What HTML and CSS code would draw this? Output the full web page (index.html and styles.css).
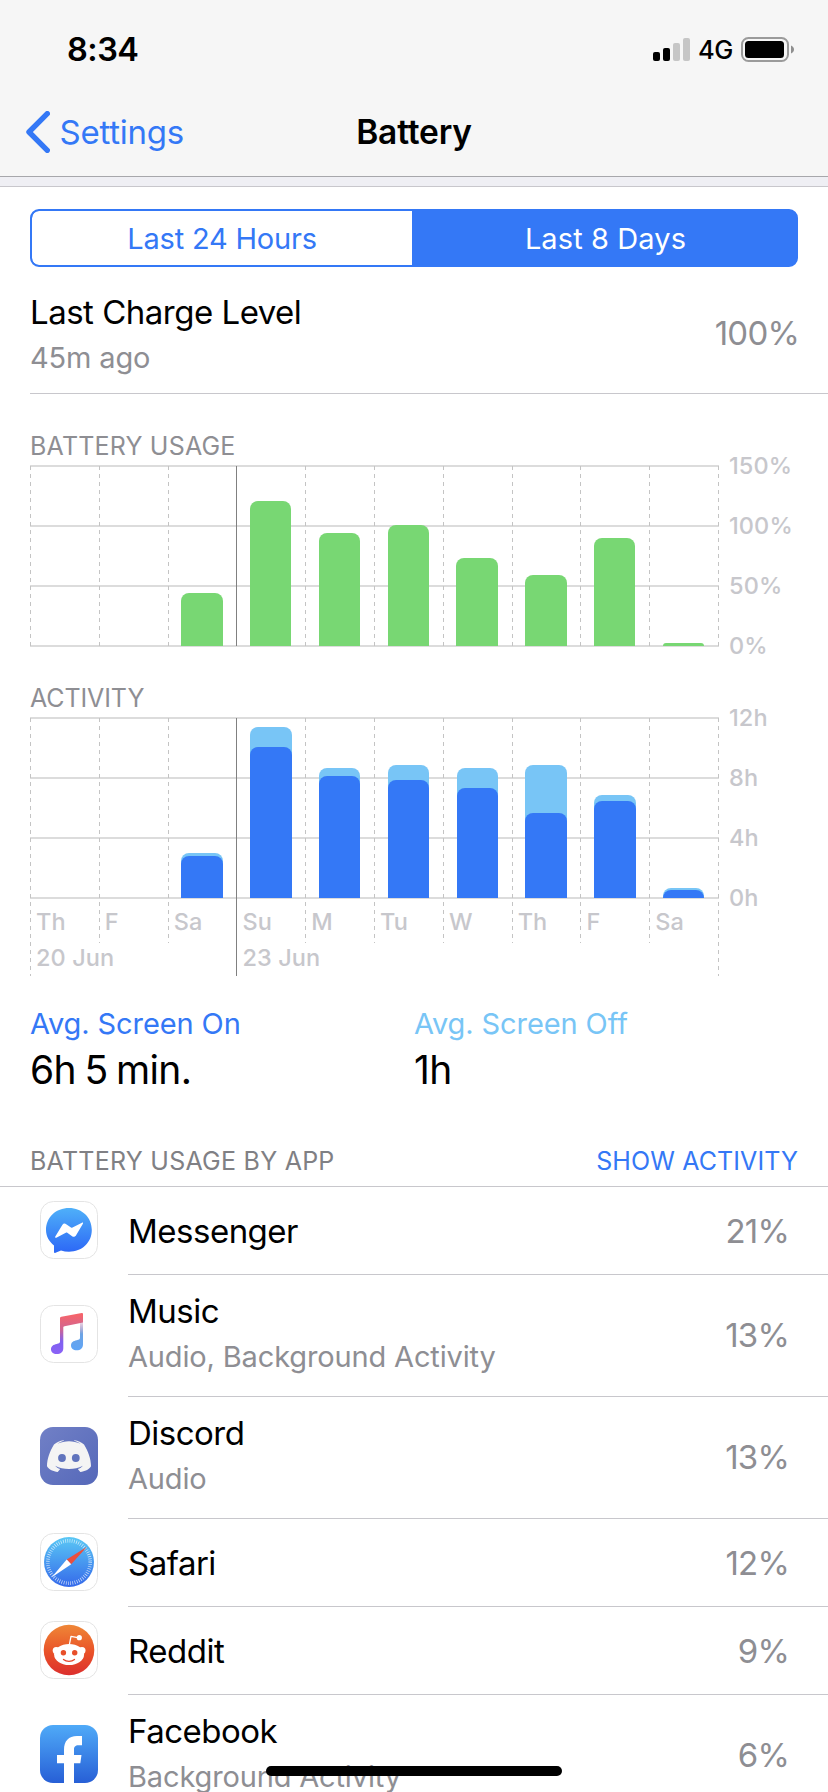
FILE: index.html
```html
<!DOCTYPE html>
<html lang="en">
  <head>
    <meta charset="UTF-8" />
    <meta name="viewport" content="width=device-width, initial-scale=1.0" />
    <title>Battery</title>
    <link rel="stylesheet" href="styles.css">
  </head>
  <body>
    <div class="screen">
      <header class="header">
        <div class="status-bar">
          <span class="time">8:34</span>
          <div class="status-icons">
            <svg class="signal" width="37" height="23" viewBox="0 0 37 23">
              <rect x="0" y="14" width="7" height="9" rx="2" />
              <rect x="10" y="10" width="7" height="13" rx="2" />
              <rect x="20" y="5" width="7" height="18" rx="2" fill="#c6c6c6" />
              <rect x="30" y="0" width="7" height="23" rx="2" fill="#c6c6c6" />
            </svg>
            <span class="network">4G</span>
            <svg width="53" height="25" viewBox="0 0 53 25">
              <rect x="1" y="1" width="46" height="23" rx="6.5" fill="none" stroke="#9b9b9b" stroke-width="2" />
              <rect x="4" y="4" width="39" height="17" rx="3.5" />
              <path d="M50 8.5c4 1.5 4 6.500 0 8z" fill="#8f8f8f" />
            </svg>
          </div>
        </div>
        <div class="nav-bar">
          <a class="back">
            <svg width="24" height="42" viewBox="0 0 24 42">
              <path d="M21.3 2.7L3 21l18.3 18.3" fill="none" stroke="#3478f6" stroke-width="5.4" stroke-linecap="round" stroke-linejoin="round" />
            </svg>
            <span class="back-label">Settings</span>
          </a>
          <h1>Battery</h1>
        </div>
      </header>

      <main>
        <div class="segmented">
          <button class="segment day">Last 24 Hours</button>
          <button class="segment week active">Last 8 Days</button>
        </div>

        <div class="charge">
          <div class="charge-text">
            <div class="charge-title">Last Charge Level</div>
            <div class="charge-time">45m ago</div>
          </div>
          <span class="charge-value">100%</span>
        </div>

        <h2 class="usage-title">BATTERY USAGE</h2>
        <div class="chart">
          <div class="plot usage">
            <div class="col"></div>
            <div class="col"></div>
            <div class="col"><div class="bars"><div class="bar" style="height: 53px"></div></div></div>
            <div class="col week-start"><div class="bars"><div class="bar" style="height: 145.3px"></div></div></div>
            <div class="col"><div class="bars"><div class="bar" style="height: 113px"></div></div></div>
            <div class="col"><div class="bars"><div class="bar" style="height: 121px"></div></div></div>
            <div class="col"><div class="bars"><div class="bar" style="height: 88px"></div></div></div>
            <div class="col"><div class="bars"><div class="bar" style="height: 71px"></div></div></div>
            <div class="col"><div class="bars"><div class="bar" style="height: 108px"></div></div></div>
            <div class="col"><div class="bars"><div class="bar" style="height: 2.7px"></div></div></div>
            <div class="col end"></div>
          </div>
          <div class="axis">
            <span>150%</span>
            <span>100%</span>
            <span>50%</span>
            <span>0%</span>
          </div>
        </div>

        <h2 class="activity-title">ACTIVITY</h2>
        <div class="chart">
          <div class="plot activity">
            <div class="col tall">
              <div class="bars"></div>
              <div class="weekday">Th</div>
              <div class="date">20 Jun</div>
            </div>
            <div class="col">
              <div class="bars"></div>
              <div class="weekday">F</div>
            </div>
            <div class="col">
              <div class="bars"><div class="bar off" style="height: 45px"><div class="bar on" style="height: 42px"></div></div></div>
              <div class="weekday">Sa</div>
            </div>
            <div class="col tall week-start">
              <div class="bars"><div class="bar off" style="height: 171px"><div class="bar on" style="height: 151px"></div></div></div>
              <div class="weekday">Su</div>
              <div class="date">23 Jun</div>
            </div>
            <div class="col">
              <div class="bars"><div class="bar off" style="height: 130px"><div class="bar on" style="height: 122px"></div></div></div>
              <div class="weekday">M</div>
            </div>
            <div class="col">
              <div class="bars"><div class="bar off" style="height: 133.5px"><div class="bar on" style="height: 118px"></div></div></div>
              <div class="weekday">Tu</div>
            </div>
            <div class="col">
              <div class="bars"><div class="bar off" style="height: 130px"><div class="bar on" style="height: 110px"></div></div></div>
              <div class="weekday">W</div>
            </div>
            <div class="col">
              <div class="bars"><div class="bar off" style="height: 132.7px"><div class="bar on" style="height: 84.7px"></div></div></div>
              <div class="weekday">Th</div>
            </div>
            <div class="col">
              <div class="bars"><div class="bar off" style="height: 103px"><div class="bar on" style="height: 97.3px"></div></div></div>
              <div class="weekday">F</div>
            </div>
            <div class="col">
              <div class="bars"><div class="bar off" style="height: 10px"><div class="bar on" style="height: 8.3px"></div></div></div>
              <div class="weekday">Sa</div>
            </div>
            <div class="col end tall"></div>
          </div>
          <div class="axis">
            <span>12h</span>
            <span>8h</span>
            <span>4h</span>
            <span>0h</span>
          </div>
        </div>

        <div class="averages">
          <div>
            <div class="avg-label screen-on">Avg. Screen On</div>
            <div class="avg-value">6h 5 min.</div>
          </div>
          <div>
            <div class="avg-label screen-off">Avg. Screen Off</div>
            <div class="avg-value">1h</div>
          </div>
        </div>

        <div class="list-header">
          <h2>BATTERY USAGE BY APP</h2>
          <a class="show-activity">SHOW ACTIVITY</a>
        </div>

        <ul class="app-list">
          <li class="app">
            <svg class="icon" viewBox="0 0 58 58">
              <defs>
                <linearGradient id="messenger" x1="0" y1="0" x2="0" y2="1">
                  <stop offset="0" stop-color="#4fb0f9" />
                  <stop offset="1" stop-color="#2c67f6" />
                </linearGradient>
              </defs>
              <rect class="tile" x="0.5" y="0.5" width="57" height="57" rx="13" />
              <path fill="url(#messenger)" d="M29 7C16 7 6 16.300 6 29c0 6.300 3.200 11.700 8 15.500V51c0 1 .7 1.200 1.500.8l5.500-2.300c2.500.8 5.200 1.200 8 1.200 13 0 22.800-9.200 22.800-21.700S42 7 29 7z" />
              <path fill="#fff" d="M15.300 35.600l7-11.600c1-1.500 2.500-1.800 3.900-.8l4.800 3.300c.5.300 1 .3 1.500 0l9.500-4.800c.8-.4 1.400.3.9 1.100l-6.800 11.500c-1 1.600-2.600 1.900-4 .9l-4.800-3.400c-.5-.3-1-.3-1.500 0l-9.500 4.900c-.9.5-1.500-.3-1-1.100z" />
            </svg>
            <div class="app-row">
              <div class="app-name">Messenger</div>
              <span class="percent">21%</span>
            </div>
          </li>
          <li class="app large">
            <svg class="icon" viewBox="0 0 58 58">
              <defs>
                <linearGradient id="note" x1="0" y1="0" x2="0" y2="1">
                  <stop offset="0.05" stop-color="#f5646b" />
                  <stop offset="0.4" stop-color="#cf6594" />
                  <stop offset="0.7" stop-color="#7f60f0" />
                  <stop offset="1" stop-color="#8b62f6" />
                </linearGradient>
                <linearGradient id="noteRight" x1="0" y1="0" x2="0" y2="1">
                  <stop offset="0.1" stop-color="#d5628b" stop-opacity="0" />
                  <stop offset="0.55" stop-color="#6ca3e4" />
                  <stop offset="1" stop-color="#5fa5f7" />
                </linearGradient>
              </defs>
              <rect class="tile" x="0.5" y="0.5" width="57" height="57" rx="13" />
              <path fill="url(#note)" d="M20 13.500c0-1 .4-1.500 1.400-1.700L41.700 8c.9-.2 1.300.2 1.300 1v8.500l-18.500 3.800c-.9.200-1.200.5-1.200 1.300v20.600c0 3.800-2.600 5.900-6.600 5.900-3.400 0-5.700-2-5.700-4.900 0-3.200 2.400-4.700 5.700-5.300 2.100-.4 3.300-.7 3.300-2.400z" />
              <path fill="url(#noteRight)" d="M43 9v30.500c0 3.800-2.600 5.800-6.300 5.800-3.400 0-5.700-1.900-5.700-4.800 0-3.200 2.400-4.700 5.700-5.300 2.100-.4 3.300-.7 3.300-2.400V10z" />
            </svg>
            <div class="app-row">
              <div>
                <div class="app-name">Music</div>
                <div class="app-detail">Audio, Background Activity</div>
              </div>
              <span class="percent">13%</span>
            </div>
          </li>
          <li class="app large">
            <svg class="icon" viewBox="0 0 58 58">
              <defs>
                <linearGradient id="discord" x1="0" y1="0" x2="1" y2="1">
                  <stop offset="0" stop-color="#7180c6" />
                  <stop offset="1" stop-color="#5568b9" />
                </linearGradient>
              </defs>
              <rect width="58" height="58" rx="13" fill="url(#discord)" />
              <path fill="#f4f4f4" d="M14 17.500c2.500-2.300 6-4 9.500-4.300l.5.600c-2.500.6-4.500 1.500-6.500 3 7-3.400 16-3.400 23 0-2-1.500-4-2.400-6.500-3l.5-.6c3.500.3 7 2 9.500 4.300C48 24 51 31.500 51 39.300c-2 3.300-6.300 5.300-10.700 5.600L37.800 42c2.200-.7 3.800-1.700 5-3.300-7.800 4.300-19.800 4.300-27.600 0 1.200 1.600 2.800 2.600 5 3.300l-2.500 2.900C13.300 44.600 9 42.600 7 39.300 7 31.500 10 24 14 17.500z" />
              <ellipse cx="22" cy="31" rx="3.9" ry="4.1" fill="#6174bd" />
              <ellipse cx="35.8" cy="31" rx="3.9" ry="4.1" fill="#6174bd" />
            </svg>
            <div class="app-row">
              <div>
                <div class="app-name">Discord</div>
                <div class="app-detail">Audio</div>
              </div>
              <span class="percent">13%</span>
            </div>
          </li>
          <li class="app">
            <svg class="icon" viewBox="0 0 58 58">
              <defs>
                <linearGradient id="safari" x1="0" y1="0" x2="0" y2="1">
                  <stop offset="0" stop-color="#5ac8f5" />
                  <stop offset="1" stop-color="#3569ea" />
                </linearGradient>
              </defs>
              <rect class="tile" x="0.5" y="0.5" width="57" height="57" rx="13" />
              <circle cx="29" cy="29" r="25" fill="url(#safari)" />
              <circle cx="29" cy="29" r="21.2" fill="none" stroke="#fff" stroke-opacity="0.75" stroke-width="3.6" stroke-dasharray="0.7 1.52" />
              <path fill="#eb4e3d" d="M47 13.700L26.700 26.600l4.500 4.700z" />
              <path fill="#fff" d="M11.500 44.500l15.200-17.900 4.500 4.700z" />
            </svg>
            <div class="app-row">
              <div class="app-name">Safari</div>
              <span class="percent">12%</span>
            </div>
          </li>
          <li class="app">
            <svg class="icon" viewBox="0 0 58 58">
              <defs>
                <linearGradient id="reddit" x1="0" y1="0" x2="0" y2="1">
                  <stop offset="0" stop-color="#ef8737" />
                  <stop offset="0.55" stop-color="#e95128" />
                  <stop offset="1" stop-color="#dc2f2e" />
                </linearGradient>
              </defs>
              <rect class="tile" x="0.5" y="0.5" width="57" height="57" rx="13" />
              <circle cx="29" cy="29" r="25.3" fill="url(#reddit)" />
              <path d="M29.300 24L31 15.300l8 1.500" fill="none" stroke="#fff" stroke-width="1.3" stroke-linejoin="round" />
              <g fill="#fff">
                <circle cx="39.3" cy="16.7" r="2.6" />
                <circle cx="16.2" cy="29.5" r="3.5" />
                <circle cx="42" cy="29.5" r="3.5" />
                <ellipse cx="29.1" cy="33.5" rx="15" ry="10.5" />
              </g>
              <circle cx="23.4" cy="31.8" r="2.7" fill="#e84f29" />
              <circle cx="34.7" cy="31.8" r="2.7" fill="#e84f29" />
              <path d="M23.500 38.500c3 2.500 8 2.500 11 0" fill="none" stroke="#e5452b" stroke-width="1.3" stroke-linecap="round" />
            </svg>
            <div class="app-row">
              <div class="app-name">Reddit</div>
              <span class="percent">9%</span>
            </div>
          </li>
          <li class="app large">
            <svg class="icon" viewBox="0 0 58 58">
              <defs>
                <linearGradient id="facebook" x1="0" y1="0" x2="0" y2="1">
                  <stop offset="0" stop-color="#4faaf8" />
                  <stop offset="1" stop-color="#275fd6" />
                </linearGradient>
              </defs>
              <rect width="58" height="58" rx="13" fill="url(#facebook)" />
              <path fill="#fff" d="M24 58V38.300h-7V30h7v-5c0-9 4.600-14 13-14h5v9.300h-3.500c-3.300 0-4.500 1.500-4.500 4.700v5h7.500l-1.200 8.300H34V58z" />
            </svg>
            <div class="app-row">
              <div>
                <div class="app-name">Facebook</div>
                <div class="app-detail">Background Activity</div>
              </div>
              <span class="percent">6%</span>
            </div>
          </li>
        </ul>
      </main>
      <div class="home-indicator"></div>
    </div>
  </body>
</html>
```
FILE: styles.css
```css
* {
  box-sizing: border-box;
}
body {
  margin: 0;
  font-family: "Inter", "Liberation Sans", sans-serif;
  background-color: #fff;
  color: #000;
}
h1,
h2 {
  margin: 0;
  font-weight: 400;
}
svg {
  display: block;
}
.screen {
  position: relative;
  width: 828px;
  height: 1792px;
  overflow: hidden;
}
.header {
  height: 177px;
  background-color: #f6f6f6;
  border-bottom: 1px solid #a7a7ab;
}
.status-bar {
  display: flex;
  justify-content: space-between;
  align-items: center;
  height: 99px;
  padding: 0 34px 0 67px;
}
.time {
  font-size: 32.5px;
  font-weight: 600;
  letter-spacing: -0.5px;
}
.status-icons {
  display: flex;
  align-items: center;
}
.network {
  width: 51px;
  padding-left: 8px;
  font-size: 25.5px;
  font-weight: 500;
  letter-spacing: -0.5px;
}
.nav-bar {
  display: grid;
  grid-template-columns: 1fr auto 1fr;
  align-items: center;
  height: 66px;
  padding: 0 26px;
}
.back {
  display: flex;
  align-items: center;
  gap: 9.5px;
  color: #3478f6;
}
.back-label {
  font-size: 33px;
  letter-spacing: -0.25px;
}
h1 {
  font-size: 33.5px;
  font-weight: 600;
  letter-spacing: -0.2px;
}
main {
  margin-top: 9px;
  border-top: 1px solid #c8c7cc;
  box-shadow: 0 -9px 0 #efeff4;
}
.segmented {
  display: flex;
  height: 58px;
  margin: 22px 30px 0;
  border: 2px solid #3478f6;
  border-radius: 9px;
  background-color: #3478f6;
  overflow: hidden;
}
.segment {
  padding: 0;
  border: none;
  background-color: #fff;
  color: #3478f6;
  font-family: inherit;
  font-size: 29px;
  letter-spacing: -0.2px;
}
.day {
  width: 380px;
  border-radius: 7px 0 0 7px;
}
.week {
  flex: 1;
  padding-left: 3px;
  letter-spacing: 0.1px;
}
.segment.active {
  background-color: #3478f6;
  color: #fff;
}
.charge {
  display: flex;
  justify-content: space-between;
  align-items: center;
  height: 127px;
  margin-left: 30px;
  padding: 5px 29px 0 0;
  border-bottom: 1px solid #c8c7cc;
}
.charge-text {
  padding-top: 3px;
}
.charge-title,
.app-name {
  font-size: 33px;
  line-height: 46px;
  letter-spacing: -0.5px;
}
.charge-time,
.app-detail {
  color: #8e8e93;
  font-size: 29px;
  line-height: 45px;
  letter-spacing: -0.15px;
}
.charge-value,
.percent {
  color: #8e8e93;
  font-size: 33px;
  letter-spacing: -0.8px;
}
h2 {
  color: #8e8e93;
  font-size: 25px;
  line-height: 30px;
  letter-spacing: 0.2px;
}
.usage-title,
.activity-title {
  padding-left: 30px;
}
.usage-title {
  margin-top: 37px;
}
.activity-title {
  margin-top: 36px;
  letter-spacing: -0.1px;
}
.chart {
  display: flex;
  margin-top: 4px;
  padding-left: 30px;
}
.plot {
  display: flex;
  align-items: flex-start;
  width: 689px;
  padding-top: 1px;
  background: repeating-linear-gradient(#dcdcdc 0 2px, transparent 2px 60px) no-repeat;
  background-size: 689px 182px;
}
.usage {
  height: 182px;
}
.activity {
  height: 259px;
}
.col {
  width: 68.85px;
  height: 180px;
  background: repeating-linear-gradient(#c4c4c4 0 4px, transparent 4px 8px) no-repeat;
  background-size: 1px 100%;
}
.activity .col {
  height: 225px;
}
.activity .tall {
  height: 258px;
}
.col.week-start {
  background: none;
  border-left: 1px solid #808080;
}
.week-start .bars,
.week-start .weekday,
.week-start .date {
  margin-left: -1px;
}
.col.end {
  width: 1px;
}
.bars {
  display: flex;
  justify-content: center;
  align-items: flex-end;
  height: 180px;
}
.bar {
  width: 41.4px;
  border-radius: 8px 8px 0 0;
  background-color: #78d773;
}
.bar.off {
  display: flex;
  align-items: flex-end;
  background-color: #78c5f6;
}
.bar.on {
  background-color: #3478f6;
}
.weekday,
.date,
.axis {
  color: #c7c7cc;
  font-size: 23.5px;
  font-weight: 500;
  letter-spacing: 0.1px;
  white-space: nowrap;
}
.weekday,
.date {
  padding-left: 6px;
  line-height: 36px;
}
.weekday {
  padding-top: 6px;
}
.axis {
  display: flex;
  flex-direction: column;
  height: 182px;
  margin-top: -29px;
  padding-left: 10px;
}
.axis span {
  line-height: 60px;
}
.averages {
  display: grid;
  grid-template-columns: 1fr 1fr;
  margin: 27px 30px 0;
}
.avg-label {
  font-size: 29px;
  line-height: 42px;
  letter-spacing: -0.1px;
}
.screen-on {
  color: #3478f6;
}
.screen-off {
  color: #78c5f6;
}
.avg-value {
  font-size: 39px;
  line-height: 50px;
  letter-spacing: -0.6px;
  word-spacing: -2px;
}
.list-header {
  display: flex;
  justify-content: space-between;
  align-items: center;
  height: 92px;
  padding: 40px 30px 0;
  border-bottom: 1px solid #c8c7cc;
}
.list-header h2 {
  color: #808084;
  letter-spacing: 0.25px;
}
.show-activity {
  color: #3478f6;
  font-size: 25px;
  letter-spacing: 0.1px;
}
.app-list {
  margin: 0;
  padding: 0;
  list-style: none;
}
.app {
  display: flex;
  align-items: center;
  height: 88px;
  padding-left: 40px;
}
.large {
  height: 122px;
}
.icon {
  width: 58px;
  height: 58px;
  margin-right: 30px;
  transform: translateY(-1px);
}
.large .icon {
  transform: translateY(-2px);
}
.tile {
  fill: #fff;
  stroke: #e4e4e4;
}
.app-row {
  display: flex;
  flex: 1;
  justify-content: space-between;
  align-items: center;
  height: 100%;
  padding-right: 39px;
  border-bottom: 1px solid #c8c7cc;
}
.large .app-row {
  padding-bottom: 2px;
}
.large .app-row > div {
  padding-bottom: 2px;
}
.home-indicator {
  position: absolute;
  left: 266px;
  top: 1766px;
  width: 296px;
  height: 10px;
  border-radius: 5px;
  background-color: #000;
}
```
